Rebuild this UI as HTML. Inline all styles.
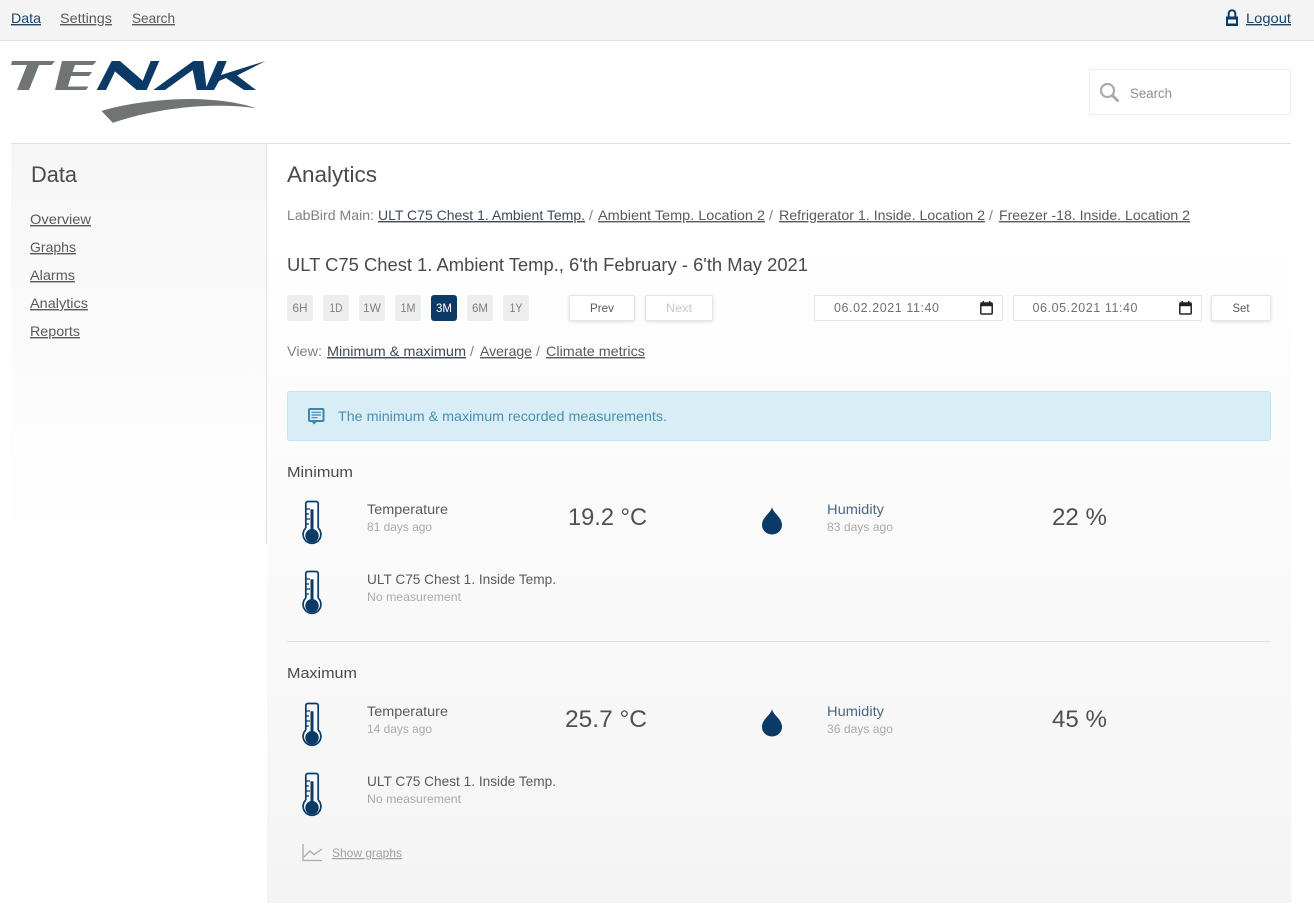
<!DOCTYPE html>
<html lang="en"><head><meta charset="utf-8"><title>Analytics</title>
<style>
html,body{margin:0;padding:0;background:#fff;width:1314px;height:908px;overflow:hidden}
.a{position:absolute;box-sizing:border-box}
svg{position:absolute;left:0;top:0}
text{font-family:"Liberation Sans",sans-serif;font-size:14px;fill:#5a5a5a}
.u{text-decoration:underline}
.bt{background:#eee;border-radius:3px;width:26px;height:26px;top:295px}
.wb{background:#fff;border:1px solid #e6e6e6;border-radius:2px;height:26px;top:295px;box-shadow:0 1px 3px rgba(0,0,0,.12)}
.di{background:#fff;border:1px solid #e4e4e4;border-radius:2px;height:26px;top:295px}
</style></head><body>
<div class="a" style="left:0;top:0;width:1314px;height:41px;background:#f4f4f4;border-bottom:1px solid #e0e0e0"></div>
<div class="a" style="left:11px;top:143px;width:1280px;height:1px;background:#e0e0e0"></div>
<div class="a" style="left:11px;top:144px;width:255px;height:400px;background:linear-gradient(#f6f6f6,#fefefe 85%,#fff)"></div>
<div class="a" style="left:266px;top:144px;width:1px;height:400px;background:#e2e2e2"></div>
<div class="a" style="left:267px;top:144px;width:1024px;height:759px;background:linear-gradient(#fff 0,#fff 12%,#f4f4f4 100%)"></div>
<div class="a" style="left:1089px;top:69px;width:202px;height:46px;background:#fff;border:1px solid #ececec;border-radius:2px"></div>
<div class="a" style="left:287px;top:391px;width:984px;height:50px;background:#d9edf7;border:1px solid #bce8f1;border-radius:3px"></div>
<div class="a" style="left:287px;top:641px;width:984px;height:1px;background:#e0e0e0"></div>
<div class="a bt" style="left:287px"></div><div class="a bt" style="left:323px"></div><div class="a bt" style="left:359px"></div><div class="a bt" style="left:395px"></div>
<div class="a bt" style="left:431px;background:#0b3a66"></div>
<div class="a bt" style="left:467px"></div><div class="a bt" style="left:503px"></div>
<div class="a wb" style="left:569px;width:66px"></div>
<div class="a wb" style="left:645px;width:68px"></div>
<div class="a di" style="left:814px;width:189px"></div>
<div class="a di" style="left:1013px;width:189px"></div>
<div class="a wb" style="left:1211px;width:60px"></div>

<svg width="1314" height="908" viewBox="0 0 1314 908" xmlns="http://www.w3.org/2000/svg">
<defs>
<g id="th" fill="none" stroke="#0b3a66">
<path d="M305.800 528V503.500a2 2 0 0 1 2-2h8.400a2 2 0 0 1 2 2V528" stroke-width="1.700"/>
<path d="M305.800 528a8.900 8.900 0 1 0 12.400 0" stroke-width="1.700"/>
<circle cx="312" cy="535.700" r="6.700" fill="#0b3a66" stroke="none"/>
<path d="M312 509.300V532" stroke-width="3"/>
<path d="M306 509h4M306 514h3M306 519h4M306 524h3" stroke-width="1.300"/>
</g>
<path id="dr" fill="#0b3a66" d="M772 507C773 513 782 517 782 525A10 9.500 0 0 1 762 525C762 517 771 513 772 507Z"/>
<g id="cal"><rect x=".8" y="2" width="11.400" height="11" rx="1" fill="none" stroke="#222" stroke-width="1.500"/><rect x=".8" y="2" width="11.400" height="3.200" fill="#222"/><rect x="2.500" y="0" width="1.500" height="2.500" fill="#222"/><rect x="9" y="0" width="1.500" height="2.500" fill="#222"/></g>
</defs>

<!-- logo -->
<polygon fill="#707475" points="12,61 55,61 51.500,65 39,65 29,90 17,90 27,65 11,65"/>
<polygon fill="#707475" points="62,61 96.500,61 93,65 75,65 72.500,72 92,72 89,76 71,76 68,86.500 88.500,86.500 86,90 55,90"/>
<polygon fill="#0b3a66" points="96.700,90 111.700,61 120,61 142.700,80.700 150.700,61 159.300,61 146.700,90 136.700,90 115,71.500 106,90"/>
<polygon fill="#0b3a66" points="153.300,90 193.300,61 203.300,61 206.700,90 196.700,90 192.700,70 165,90"/>
<polygon fill="#0b3a66" points="217.700,61 226.700,61 221,75 265.500,61 237,75.500 256,90 244,90 226,78 219,81 214,90 205,90"/>
<path fill="#707475" d="M101.500 111C130 102 175 97.500 205 99.500C225 100.500 245 104 256 108.300C225 103.500 170 104 112.700 122.700Z"/>

<!-- nav -->
<text x="11" y="23" textLength="30" lengthAdjust="spacingAndGlyphs" class="u" style="fill:#1d4468">Data</text>
<text x="60" y="23" textLength="52" lengthAdjust="spacingAndGlyphs" class="u">Settings</text>
<text x="132" y="23" textLength="43" lengthAdjust="spacingAndGlyphs" class="u">Search</text>
<text x="1246" y="23" textLength="45" lengthAdjust="spacingAndGlyphs" class="u" style="fill:#1d4468">Logout</text>
<path d="M1228.700 17v-3.500a3.300 3.300 0 0 1 6.600 0V17" fill="none" stroke="#0b3a66" stroke-width="2"/>
<path fill="#0b3a66" fill-rule="evenodd" d="M1226 16.500h12V26h-12zM1228 19.500V23.500h8V19.500z"/>

<!-- search -->
<circle cx="1107.500" cy="90.500" r="6.500" fill="none" stroke="#aaa" stroke-width="2.200"/>
<path d="M1112.500 95.500L1117.500 100.500" stroke="#aaa" stroke-width="3" stroke-linecap="round"/>
<text x="1130" y="98" textLength="42" lengthAdjust="spacingAndGlyphs" style="fill:#8f8f8f">Search</text>

<!-- sidebar -->
<text x="31" y="182" textLength="46" lengthAdjust="spacingAndGlyphs" style="font-size:22px;fill:#4a4a4a">Data</text>
<text x="30" y="224" textLength="61" lengthAdjust="spacingAndGlyphs" class="u">Overview</text>
<text x="30" y="252" textLength="46" lengthAdjust="spacingAndGlyphs" class="u">Graphs</text>
<text x="30" y="280" textLength="45" lengthAdjust="spacingAndGlyphs" class="u">Alarms</text>
<text x="30" y="308" textLength="58" lengthAdjust="spacingAndGlyphs" class="u">Analytics</text>
<text x="30" y="336" textLength="50" lengthAdjust="spacingAndGlyphs" class="u">Reports</text>

<!-- main -->
<text x="287" y="182" textLength="90" lengthAdjust="spacingAndGlyphs" style="font-size:22px;fill:#4a4a4a">Analytics</text>
<text x="287" y="220" textLength="87" lengthAdjust="spacingAndGlyphs" style="fill:#808080">LabBird Main:</text>
<text x="378" y="220" textLength="207" lengthAdjust="spacingAndGlyphs" class="u" style="fill:#3f4a58">ULT C75 Chest 1. Ambient Temp.</text>
<text x="589" y="220" style="fill:#808080">/</text>
<text x="598" y="220" textLength="167" lengthAdjust="spacingAndGlyphs" class="u">Ambient Temp. Location 2</text>
<text x="769" y="220" style="fill:#808080">/</text>
<text x="779" y="220" textLength="206" lengthAdjust="spacingAndGlyphs" class="u">Refrigerator 1. Inside. Location 2</text>
<text x="989" y="220" style="fill:#808080">/</text>
<text x="999" y="220" textLength="191" lengthAdjust="spacingAndGlyphs" class="u">Freezer -18. Inside. Location 2</text>
<text x="287" y="271" textLength="521" lengthAdjust="spacingAndGlyphs" style="font-size:18px;fill:#4a4a4a">ULT C75 Chest 1. Ambient Temp., 6'th February - 6'th May 2021</text>

<text x="292.500" y="312" textLength="15" lengthAdjust="spacingAndGlyphs" style="font-size:12px;fill:#808080">6H</text>
<text x="329.500" y="312" textLength="13" lengthAdjust="spacingAndGlyphs" style="font-size:12px;fill:#808080">1D</text>
<text x="363" y="312" textLength="18" lengthAdjust="spacingAndGlyphs" style="font-size:12px;fill:#808080">1W</text>
<text x="400.500" y="312" textLength="15" lengthAdjust="spacingAndGlyphs" style="font-size:12px;fill:#808080">1M</text>
<text x="436" y="312" textLength="16" lengthAdjust="spacingAndGlyphs" style="font-size:12px;fill:#fff">3M</text>
<text x="472" y="312" textLength="16" lengthAdjust="spacingAndGlyphs" style="font-size:12px;fill:#808080">6M</text>
<text x="509.500" y="312" textLength="13" lengthAdjust="spacingAndGlyphs" style="font-size:12px;fill:#808080">1Y</text>
<text x="590" y="312" textLength="24" lengthAdjust="spacingAndGlyphs" style="font-size:12px;fill:#5a5a5a">Prev</text>
<text x="666" y="312" textLength="26" lengthAdjust="spacingAndGlyphs" style="font-size:12px;fill:#c8c8c8">Next</text>
<text x="1232.500" y="312" textLength="17" lengthAdjust="spacingAndGlyphs" style="font-size:12px;fill:#5a5a5a">Set</text>
<text x="834" y="312" textLength="105" style="font-size:12.500px;fill:#707070">06.02.2021 11:40</text>
<text x="1032.500" y="312" textLength="105" style="font-size:12.500px;fill:#707070">06.05.2021 11:40</text>
<use href="#cal" x="980" y="301"/>
<use href="#cal" x="1179" y="301"/>

<text x="287" y="356" textLength="35" lengthAdjust="spacingAndGlyphs" style="fill:#808080">View:</text>
<text x="327" y="356" textLength="139" lengthAdjust="spacingAndGlyphs" class="u" style="fill:#3f4a58">Minimum &amp; maximum</text>
<text x="470" y="356" style="fill:#808080">/</text>
<text x="480" y="356" textLength="52" lengthAdjust="spacingAndGlyphs" class="u">Average</text>
<text x="536" y="356" style="fill:#808080">/</text>
<text x="546" y="356" textLength="99" lengthAdjust="spacingAndGlyphs" class="u">Climate metrics</text>

<!-- alert -->
<path fill="#3a87ad" fill-rule="evenodd" d="M310 408h12.500a2 2 0 0 1 2 2v10a2 2 0 0 1-2 2h-6l-2.500 2.500-2-2.500h-2a2 2 0 0 1-2-2v-10a2 2 0 0 1 2-2zM310 410v10h12.500v-10z"/>
<path d="M311.500 412.300h9.500M311.500 415h9.500M311.500 417.700h6" stroke="#3a87ad" stroke-width="1.200"/>
<text x="338" y="421" textLength="329" lengthAdjust="spacingAndGlyphs" style="fill:#4a8fb0">The minimum &amp; maximum recorded measurements.</text>

<!-- Minimum -->
<text x="287" y="477" textLength="66" lengthAdjust="spacingAndGlyphs" style="font-size:15px;fill:#4a4a4a">Minimum</text>
<use href="#th"/>
<text x="367" y="514" textLength="81" lengthAdjust="spacingAndGlyphs">Temperature</text>
<text x="367" y="531" textLength="65" lengthAdjust="spacingAndGlyphs" style="font-size:12px;fill:#aaa">81 days ago</text>
<text x="568" y="525" textLength="79" lengthAdjust="spacingAndGlyphs" style="font-size:24px;fill:#505050">19.2 °C</text>
<use href="#dr"/>
<text x="827" y="514" textLength="57" lengthAdjust="spacingAndGlyphs" style="fill:#4a6885">Humidity</text>
<text x="827" y="531" textLength="66" lengthAdjust="spacingAndGlyphs" style="font-size:12px;fill:#aaa">83 days ago</text>
<text x="1052" y="525" textLength="55" lengthAdjust="spacingAndGlyphs" style="font-size:24px;fill:#505050">22 %</text>
<use href="#th" y="70"/>
<text x="367" y="584" textLength="189" lengthAdjust="spacingAndGlyphs">ULT C75 Chest 1. Inside Temp.</text>
<text x="367" y="601" textLength="94" lengthAdjust="spacingAndGlyphs" style="font-size:12px;fill:#aaa">No measurement</text>

<!-- Maximum -->
<text x="287" y="678" textLength="70" lengthAdjust="spacingAndGlyphs" style="font-size:15px;fill:#4a4a4a">Maximum</text>
<use href="#th" y="202"/>
<text x="367" y="716" textLength="81" lengthAdjust="spacingAndGlyphs">Temperature</text>
<text x="367" y="733" textLength="65" lengthAdjust="spacingAndGlyphs" style="font-size:12px;fill:#aaa">14 days ago</text>
<text x="565" y="727" textLength="82" lengthAdjust="spacingAndGlyphs" style="font-size:24px;fill:#505050">25.7 °C</text>
<use href="#dr" y="202"/>
<text x="827" y="716" textLength="57" lengthAdjust="spacingAndGlyphs" style="fill:#4a6885">Humidity</text>
<text x="827" y="733" textLength="66" lengthAdjust="spacingAndGlyphs" style="font-size:12px;fill:#aaa">36 days ago</text>
<text x="1052" y="727" textLength="55" lengthAdjust="spacingAndGlyphs" style="font-size:24px;fill:#505050">45 %</text>
<use href="#th" y="272"/>
<text x="367" y="786" textLength="189" lengthAdjust="spacingAndGlyphs">ULT C75 Chest 1. Inside Temp.</text>
<text x="367" y="803" textLength="94" lengthAdjust="spacingAndGlyphs" style="font-size:12px;fill:#aaa">No measurement</text>

<!-- show graphs -->
<path d="M303 844V860.500H322M304 857L310 851L314 854.500L322 849" fill="none" stroke="#aaa" stroke-width="1.300"/>
<text x="332" y="857" textLength="70" lengthAdjust="spacingAndGlyphs" class="u" style="font-size:12px;fill:#a0a0a0">Show graphs</text>
</svg>
</body></html>
